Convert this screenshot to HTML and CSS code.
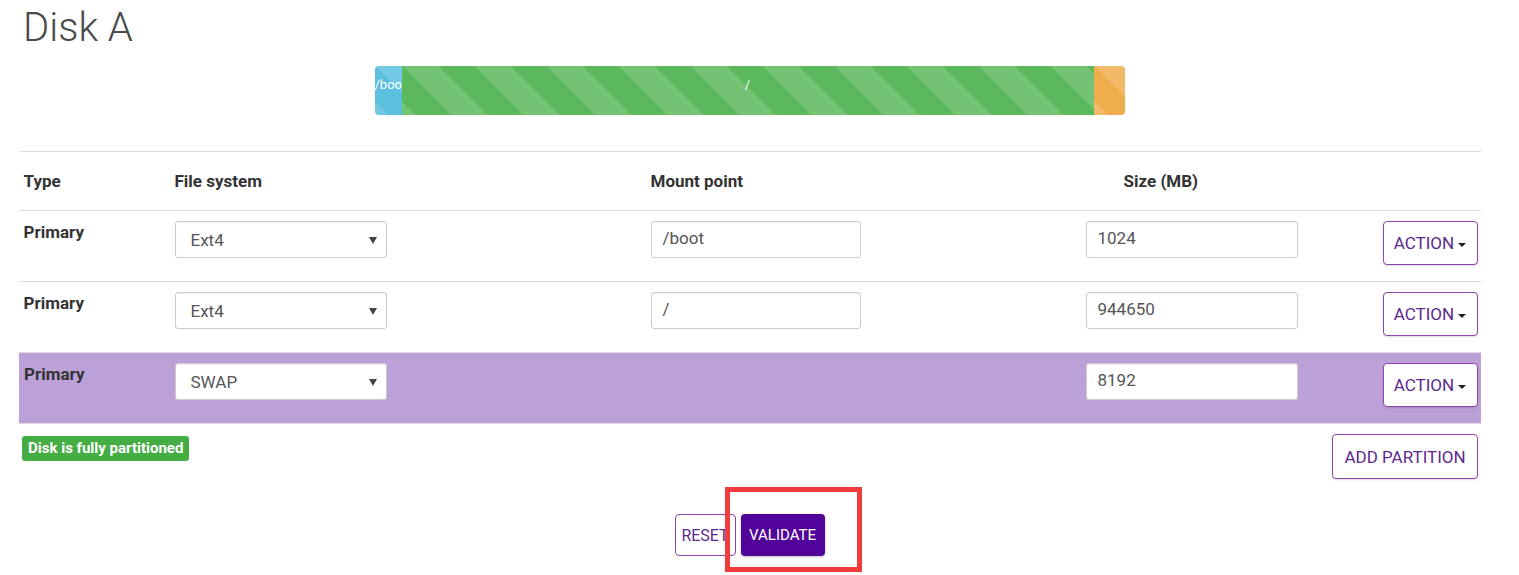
FILE: index.html
```html
<!DOCTYPE html>
<html>
<head>
<meta charset="utf-8">
<link rel="stylesheet" href="styles.css">
</head>
<body>
<div class="page">
  <h1 class="title">Disk A</h1>
  <div class="bar">
    <div class="seg seg-boot" style="width:27px"><span>/boot</span></div>
    <div class="seg seg-root" style="width:692px"><span>/</span></div>
    <div class="seg seg-swap" style="width:31px"></div>
  </div>
  <table class="parts">
    <colgroup>
      <col style="width:151px"><col style="width:476px"><col style="width:435px"><col style="width:297px"><col>
    </colgroup>
    <thead>
      <tr>
        <th>Type</th><th>File system</th><th>Mount point</th><th class="th-size">Size (MB)</th><th></th>
      </tr>
    </thead>
    <tbody>
      <tr>
        <td class="type">Primary</td>
        <td><div class="select">Ext4<span class="arrow"></span></div></td>
        <td><div class="input">/boot</div></td>
        <td><div class="input">1024</div></td>
        <td class="act"><button class="btn-outline">ACTION <span class="caret"></span></button></td>
      </tr>
      <tr>
        <td class="type">Primary</td>
        <td><div class="select">Ext4<span class="arrow"></span></div></td>
        <td><div class="input">/</div></td>
        <td><div class="input">944650</div></td>
        <td class="act"><button class="btn-outline">ACTION <span class="caret"></span></button></td>
      </tr>
      <tr class="selected">
        <td class="type">Primary</td>
        <td><div class="select">SWAP<span class="arrow"></span></div></td>
        <td></td>
        <td><div class="input">8192</div></td>
        <td class="act"><button class="btn-outline">ACTION <span class="caret"></span></button></td>
      </tr>
    </tbody>
  </table>
  <div class="footer-row">
    <span class="badge">Disk is fully partitioned</span>
    <button class="btn-outline btn-add">ADD PARTITION</button>
  </div>
  <div class="actions">
    <button class="btn-outline btn-reset">RESET</button>
    <button class="btn-primary">VALIDATE</button>
    <div class="highlight"></div>
  </div>
</div>
</body>
</html>
```
FILE: styles.css
```css
* { box-sizing: border-box; }
html, body { min-height: 100%; }
body {
  margin: 0;
  font-family: Roboto, "Liberation Sans", sans-serif;
  color: #333;
  background: #fff;
}
.page {
  width: 1463px;
  margin-left: 18px;
  padding-bottom: 40px;
}
.title {
  margin: 0;
  padding: 3px 0 0 5px;
  height: 66px;
  font-weight: 300;
  font-size: 40px;
  line-height: 50px;
  color: #4a4a4a;
}
.bar {
  width: 750px;
  height: 49px;
  margin: 0 auto;
  display: flex;
  border-radius: 4px;
  overflow: hidden;
}
.seg {
  height: 100%;
  color: #fff;
  font-size: 13px;
  text-align: center;
  padding-top: 11px;
  overflow: hidden;
  white-space: nowrap;
  background-image: linear-gradient(45deg, rgba(255,255,255,.15) 25%, transparent 25%, transparent 50%, rgba(255,255,255,.15) 50%, rgba(255,255,255,.15) 75%, transparent 75%, transparent);
  background-size: 72px 72px;
}
.seg-boot { background-color: #5bc0de; text-align: left; }
.seg-root { background-color: #5cb85c; }
.seg-swap { background-color: #f0ad4e; }

.parts {
  width: 100%;
  margin-top: 36px;
  border-collapse: collapse;
  table-layout: fixed;
  font-size: 17px;
}
.parts th {
  text-align: left;
  font-weight: 700;
  height: 59px;
  padding: 0 5px;
  border-top: 1px solid #ddd;
  border-bottom: 1px solid #ddd;
  color: #333;
}
.parts th.th-size { padding-left: 43px; }
.parts td {
  height: 71px;
  padding: 10px 5px 0;
  vertical-align: top;
  border-bottom: 1px solid #ddd;
}
.parts td.type {
  font-weight: 700;
  padding-top: 11px;
  color: #333;
}
.parts tr.selected td { background: #bca1d8; }
.parts tr.selected td:first-child { border-left: 1px solid #fff; }
.select, .input {
  width: 212px;
  height: 37px;
  border: 1px solid #ccc;
  border-radius: 3px;
  background: #fff;
  color: #555;
  font-size: 17px;
  line-height: 20px;
  padding: 8px 15px;
  position: relative;
  box-shadow: inset 0 1px 1px rgba(0,0,0,.06);
}
.input { width: 210px; padding: 6px 11px; }
.parts td:nth-child(4) .input { width: 212px; }
.select .arrow {
  position: absolute;
  right: 9px;
  top: 15px;
  border-left: 4px solid transparent;
  border-right: 4px solid transparent;
  border-top: 7px solid #444;
}
.act { text-align: right; padding-right: 4px !important; }
.btn-outline {
  font-family: Roboto, "Liberation Sans", sans-serif;
  background: #fff;
  border: 1px solid #8e44ad;
  border-radius: 4px;
  color: #5b2a8c;
  font-size: 17px;
  height: 44px;
  padding: 0 6px;
  box-shadow: 0 1px 2px rgba(0,0,0,.15);
  cursor: pointer;
}
.act .btn-outline { width: 95px; }
.caret {
  display: inline-block;
  vertical-align: middle;
  margin-left: 0;
  border-left: 4px solid transparent;
  border-right: 4px solid transparent;
  border-top: 4px solid #222;
}
.footer-row {
  display: flex;
  justify-content: space-between;
  align-items: flex-start;
  padding: 10px 3px 0 4px;
}
.badge {
  margin-top: 2px;
  background: #44ad44;
  color: #fff;
  font-weight: 700;
  font-size: 15px;
  line-height: 25px;
  height: 25px;
  padding: 0 6px;
  border-radius: 3px;
}
.btn-add { height: 45px; width: 146px; padding: 0; }
.actions {
  position: relative;
  display: flex;
  justify-content: center;
  gap: 5px;
  margin-top: 35px;
}
.btn-reset {
  height: 42px;
  width: 61px;
  padding: 0;
  font-size: 16px;
  box-shadow: none;
}
.btn-primary {
  height: 42px;
  width: 84px;
  background: #52049a;
  color: #fff;
  border: none;
  border-radius: 4px;
  font-family: Roboto, "Liberation Sans", sans-serif;
  font-size: 15px;
  box-shadow: 0 1px 3px rgba(0,0,0,.25);
}
.highlight {
  position: absolute;
  left: 707px;
  top: -27px;
  width: 137px;
  height: 85px;
  border: 5px solid #f23b3b;
  pointer-events: none;
}
```
